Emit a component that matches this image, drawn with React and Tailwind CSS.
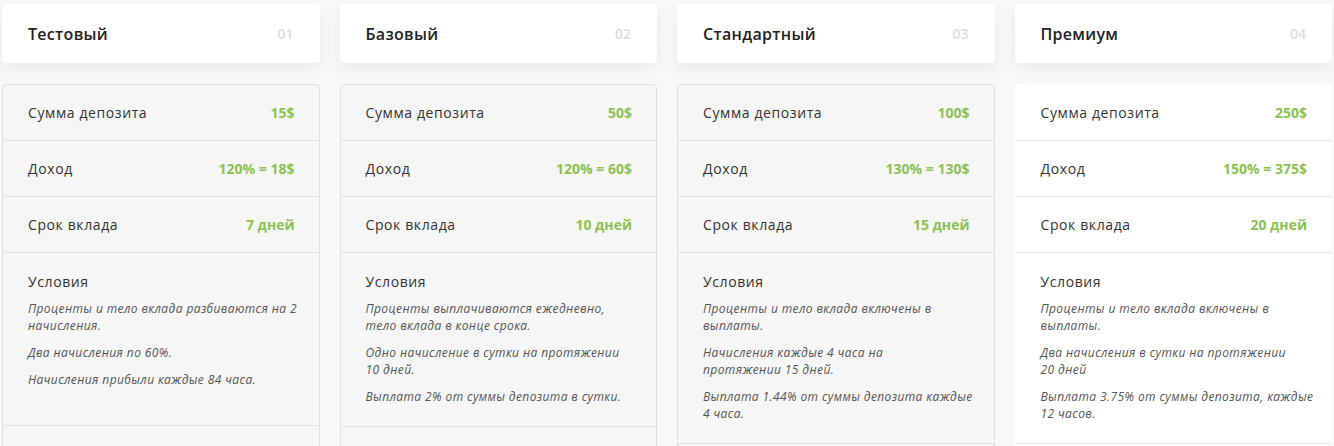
import React from 'react';

const plans = [
  {
    name: 'Тестовый',
    num: '01',
    deposit: '15$',
    income: '120% = 18$',
    term: '7 дней',
    terms: [
      'Проценты и тело вклада разбиваются на 2\nначисления.',
      'Два начисления по 60%.',
      'Начисления прибыли каждые 84 часа.',
    ],
  },
  {
    name: 'Базовый',
    num: '02',
    deposit: '50$',
    income: '120% = 60$',
    term: '10 дней',
    terms: [
      'Проценты выплачиваются ежедневно,\nтело вклада в конце срока.',
      'Одно начисление в сутки на протяжении\n10 дней.',
      'Выплата 2% от суммы депозита в сутки.',
    ],
  },
  {
    name: 'Стандартный',
    num: '03',
    deposit: '100$',
    income: '130% = 130$',
    term: '15 дней',
    terms: [
      'Проценты и тело вклада включены в\nвыплаты.',
      'Начисления каждые 4 часа на\nпротяжении 15 дней.',
      'Выплата 1.44% от суммы депозита каждые\n4 часа.',
    ],
  },
  {
    name: 'Премиум',
    num: '04',
    deposit: '250$',
    income: '150% = 375$',
    term: '20 дней',
    terms: [
      'Проценты и тело вклада включены в\nвыплаты.',
      'Два начисления в сутки на протяжении\n20 дней',
      'Выплата 3.75% от суммы депозита, каждые\n12 часов.',
    ],
    active: true,
  },
];

const Row = ({ label, value }) => (
  <div className="flex items-center justify-between h-[56px] pl-[25px] pr-[24px] border-b border-[#e2e2e2]">
    <span className="text-[14px] tracking-[0.6px] text-[#333]">{label}</span>
    <span className="text-[14px] font-bold text-[#8cc152]">{value}</span>
  </div>
);

const PlanColumn = ({ plan }) => (
  <div className="flex flex-col">
    <div className="flex items-center justify-between h-[59px] px-[26px] bg-white rounded-[4px] shadow-[0_6px_16px_rgba(0,0,0,0.06)]">
      <span className="text-[16px] font-semibold tracking-[0.3px] text-[#222]">{plan.name}</span>
      <span className="text-[14px] font-semibold text-[#dcdcdc]">{plan.num}</span>
    </div>
    <div
      className={`mt-[21px] rounded-t-[4px] border ${
        plan.active ? 'bg-white border-white' : 'bg-[#f6f6f6] border-[#e0e0e0]'
      }`}
    >
      <Row label="Сумма депозита" value={plan.deposit} />
      <Row label="Доход" value={plan.income} />
      <Row label="Срок вклада" value={plan.term} />
      <div className="min-h-[173px] pl-[25px] pr-[8px] pt-[19px] pb-[21px] border-b border-[#e2e2e2]">
        <div className="text-[14px] leading-[20px] tracking-[0.6px] text-[#333] mb-[8px]">Условия</div>
        <div className="flex flex-col gap-[10px]">
          {plan.terms.map((t, i) => (
            <p key={i} className="text-[12px] leading-[17px] italic tracking-[0.4px] text-[#555] whitespace-pre-line">
              {t}
            </p>
          ))}
        </div>
      </div>
      <div className="h-[60px]"></div>
    </div>
  </div>
);

export default function App() {
  return (
    <div
      className="min-h-screen bg-[#f8f8f8] pt-[4px] px-[2px] overflow-hidden"
      style={{ fontFamily: '"Open Sans", "Noto Sans", sans-serif' }}
    >
      <div className="grid grid-cols-4 gap-[20px]">
        {plans.map((p) => (
          <PlanColumn key={p.num} plan={p} />
        ))}
      </div>
    </div>
  );
}
